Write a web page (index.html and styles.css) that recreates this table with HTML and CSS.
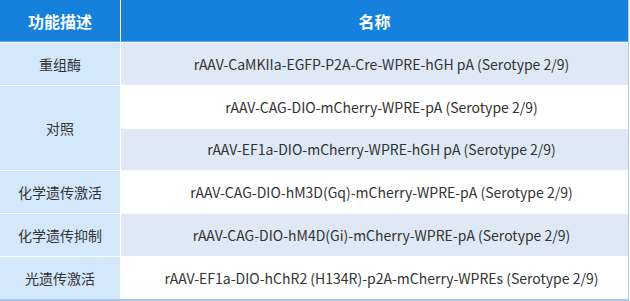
FILE: index.html
```html
<!DOCTYPE html>
<html lang="zh">
<head>
<meta charset="utf-8">
<link rel="stylesheet" href="styles.css">
</head>
<body>
<table class="vt">
  <thead>
    <tr><th class="c1">功能描述</th><th class="c2">名称</th></tr>
  </thead>
  <tbody>
    <tr class="alt"><td class="lab">重组酶</td><td class="nm">rAAV-CaMKIIa-EGFP-P2A-Cre-WPRE-hGH pA (Serotype 2/9)</td></tr>
    <tr><td class="lab" rowspan="2">对照</td><td class="nm">rAAV-CAG-DIO-mCherry-WPRE-pA (Serotype 2/9)</td></tr>
    <tr class="alt"><td class="nm">rAAV-EF1a-DIO-mCherry-WPRE-hGH pA (Serotype 2/9)</td></tr>
    <tr><td class="lab">化学遗传激活</td><td class="nm">rAAV-CAG-DIO-hM3D(Gq)-mCherry-WPRE-pA (Serotype 2/9)</td></tr>
    <tr class="alt"><td class="lab">化学遗传抑制</td><td class="nm">rAAV-CAG-DIO-hM4D(Gi)-mCherry-WPRE-pA (Serotype 2/9)</td></tr>
    <tr><td class="lab">光遗传激活</td><td class="nm">rAAV-EF1a-DIO-hChR2 (H134R)-p2A-mCherry-WPREs (Serotype 2/9)</td></tr>
  </tbody>
</table>
</body>
</html>
```
FILE: styles.css
```css
html, body { margin: 0; padding: 0; background: #ffffff; }
body { font-family: "Noto Sans CJK SC", "Noto Sans", sans-serif; color: #333333; }
.vt {
  width: 629px;
  border-collapse: separate;
  border-spacing: 0;
  table-layout: fixed;
  border-right: 1px solid #a9cdf0;
  border-bottom: 2px solid #a9c6e6;
}
.vt th {
  background: #1581dc;
  color: #ffffff;
  font-size: 16px;
  font-weight: bold;
  height: 41px;
  padding: 0;
  text-align: center;
  border-bottom: 1px solid #5aa6ea;
}
.vt th.c1 { width: 120px; border-right: 1px solid #ffffff; }
.vt td {
  height: 41.8px;
  padding: 0;
  text-align: center;
  font-size: 14px;
  border-top: 1px solid #ffffff;
  background: #ffffff;
}
.vt td.nm { padding-left: 14px; }
.vt tr.alt td { background: #dee9f5; }
.vt td.lab, .vt tr.alt td.lab {
  background: #d4e8fc;
  border-right: 1px solid #ffffff;
  font-size: 14px;
}
```
